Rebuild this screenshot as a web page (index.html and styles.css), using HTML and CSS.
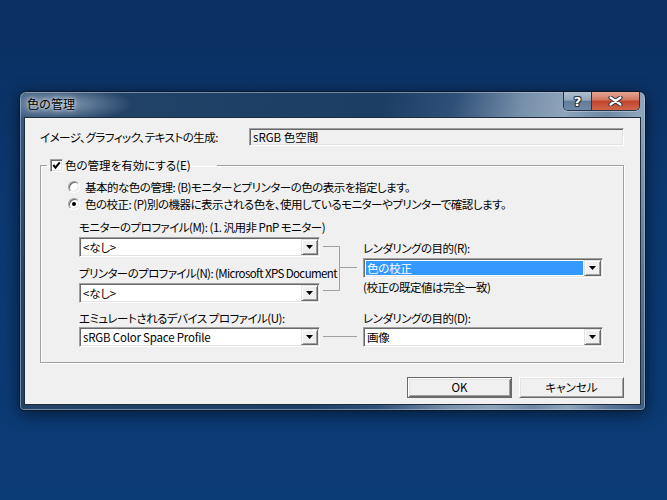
FILE: index.html
```html
<!DOCTYPE html>
<html lang="ja">
<head>
<meta charset="utf-8">
<title>色の管理</title>
<link rel="stylesheet" href="styles.css">
</head>
<body>
<div class="desktop">
  <div class="window">
    <div class="titlebar">
      <span class="title">色の管理</span>
      <div class="caption">
        <div class="cbtn help"><span>?</span></div>
        <div class="cbtn close">
          <svg width="15" height="10" viewBox="0 0 15 10"><path d="M2.5 1.5 L12.5 8.5 M12.5 1.5 L2.5 8.5" stroke="#27313d" stroke-width="4.2" stroke-linecap="round" fill="none"/><path d="M2.5 1.5 L12.5 8.5 M12.5 1.5 L2.5 8.5" stroke="#fff" stroke-width="2.2" stroke-linecap="round" fill="none"/></svg>
        </div>
      </div>
    </div>
    <div class="client">
      <div class="row-render">
        <span class="lbl">イメージ、グラフィック、テキストの生成:</span>
        <div class="textbox">sRGB 色空間</div>
      </div>
      <fieldset class="group">
        <legend class="group-head">
          <span class="check"><svg width="11" height="11" viewBox="0 0 11 11"><path d="M2.3 5 L4.5 7.6 L8.7 2.4" stroke="#000" stroke-width="2" fill="none"/></svg></span>
          <span>色の管理を有効にする(E)</span>
        </legend>
        <div class="radios">
          <div class="radio-row"><span class="radio"></span><span>基本的な色の管理: (B)モニターとプリンターの色の表示を指定します。</span></div>
          <div class="radio-row"><span class="radio on"></span><span>色の校正: (P)別の機器に表示される色を、使用しているモニターやプリンターで確認します。</span></div>
        </div>
        <div class="profiles">
          <div class="col-left">
            <div class="lbl l-m">モニターのプロファイル(M): (1. 汎用非 PnP モニター)</div>
            <div class="combo c-m"><span class="value">&lt;なし&gt;</span><span class="drop"><svg width="7" height="4" viewBox="0 0 7 4"><path d="M0 0 H7 L3.5 4 Z" fill="#000"/></svg></span></div>
            <div class="lbl l-n">プリンターのプロファイル(N): (Microsoft XPS Document</div>
            <div class="combo c-n"><span class="value">&lt;なし&gt;</span><span class="drop"><svg width="7" height="4" viewBox="0 0 7 4"><path d="M0 0 H7 L3.5 4 Z" fill="#000"/></svg></span></div>
            <div class="lbl l-u">エミュレートされるデバイス プロファイル(U):</div>
            <div class="combo c-u"><span class="value">sRGB Color Space Profile</span><span class="drop"><svg width="7" height="4" viewBox="0 0 7 4"><path d="M0 0 H7 L3.5 4 Z" fill="#000"/></svg></span></div>
          </div>
          <svg class="connector" width="43" height="128" viewBox="0 0 43 128">
            <g stroke="#a0a0a0" stroke-width="1" fill="none">
              <path d="M3 27.5 H19.5 V71.5 H3"/>
              <path d="M19.5 48.5 H37"/>
              <path d="M3 117.5 H37"/>
            </g>
          </svg>
          <div class="col-right">
            <div class="lbl l-r">レンダリングの目的(R):</div>
            <div class="combo c-r"><span class="value selected">色の校正</span><span class="drop"><svg width="7" height="4" viewBox="0 0 7 4"><path d="M0 0 H7 L3.5 4 Z" fill="#000"/></svg></span></div>
            <div class="lbl note">(校正の既定値は完全一致)</div>
            <div class="lbl l-d">レンダリングの目的(D):</div>
            <div class="combo c-d"><span class="value">画像</span><span class="drop"><svg width="7" height="4" viewBox="0 0 7 4"><path d="M0 0 H7 L3.5 4 Z" fill="#000"/></svg></span></div>
          </div>
        </div>
      </fieldset>
      <div class="buttons">
        <button class="btn default">OK</button>
        <button class="btn">キャンセル</button>
      </div>
    </div>
  </div>
</div>
</body>
</html>
```
FILE: styles.css
```css
* { box-sizing: border-box; }
html, body { margin: 0; height: 100%; }
body {
  background: linear-gradient(180deg, #0b2f60 0%, #0c3870 40%, #0b3b75 100%);
  font-family: "Noto Sans CJK JP", "Noto Sans", sans-serif;
  font-size: 12px;
  color: #000;
  overflow: hidden;
}
.desktop { padding: 91px 0 0 19px; }

.window {
  width: 627px;
  height: 320px;
  border: 1px solid #0a182a;
  border-radius: 7px 7px 5px 5px;
  padding: 0 5px 6px 5px;
  display: flex;
  flex-direction: column;
  background:
    radial-gradient(ellipse 70px 18px at 42px 12px, rgba(200,214,230,0.6), rgba(200,214,230,0) 100%),
    linear-gradient(104deg, #3a5a80 0%, #234468 7%, #1c3d64 52%, #2f5078 62%, #7890ab 72%, #8ea4bb 78%, #6e88a6 84%, #90a6bd 89%, #58759a 95%, #3b5c84 100%);
  box-shadow: 0 3px 16px rgba(0,0,0,0.55), inset 0 0 0 1px rgba(180,200,222,0.55);
}

.titlebar {
  height: 26px;
  display: flex;
  justify-content: space-between;
  align-items: flex-start;
}
.title {
  padding: 4px 0 0 2px;
  line-height: 16px;
  font-size: 12px;
  color: #000;
  text-shadow: 0 0 6px rgba(255,255,255,0.8), 0 0 3px rgba(255,255,255,0.7);
}
.caption {
  display: flex;
  height: 19px;
  border: 1px solid #25364a;
  border-top: none;
  border-radius: 0 0 5px 5px;
  overflow: hidden;
  box-shadow: 0 1px 0 rgba(200,215,230,0.5);
}
.cbtn {
  display: flex;
  align-items: center;
  justify-content: center;
  height: 100%;
}
.cbtn.help {
  width: 28px;
  border-right: 1px solid #25364a;
  background: linear-gradient(180deg, #b2c1d1 0%, #91a6bc 45%, #617b98 52%, #6f8aa8 100%);
}
.cbtn.help span {
  font-family: "DejaVu Sans", sans-serif;
  font-weight: bold;
  font-size: 13px;
  line-height: 13px;
  color: #fff;
  text-shadow: 0 0 1px #1d2835, 1px 1px 0 #2a3646, -1px -1px 0 #2a3646, 1px -1px 0 #2a3646, -1px 1px 0 #2a3646;
}
.cbtn.close {
  width: 47px;
  background: linear-gradient(180deg, #e6a595 0%, #d67a62 42%, #c2452c 52%, #d0664a 100%);
}

.client {
  height: 286px;
  background: #f0f0f0;
  box-shadow: 0 0 0 1px #1f2c3b;
  padding: 10px 16px 0 15px;
  display: flex;
  flex-direction: column;
  font-size: 11.5px;
  letter-spacing: -0.5px;
}

.row-render {
  display: flex;
  align-items: center;
  height: 18px;
}
.lbl { line-height: 16px; white-space: nowrap; font-feature-settings: "palt"; }
.textbox {
  margin-left: auto;
  width: 375px;
  height: 18px;
  border: 1px solid;
  border-color: #a0a0a0 #fff #fff #a0a0a0;
  box-shadow: inset 1px 1px 0 #696969, inset -1px -1px 0 #e3e3e3;
  padding: 0 3px;
  line-height: 16px;
  background: #f0f0f0;
  letter-spacing: 0;
}

.group {
  margin: 12px 0 0 0;
  padding: 0 0 15px 27px;
  border: 1px solid #a0a0a0;
  box-shadow: 1px 1px 0 #fff, inset 1px 1px 0 #fff;
  min-width: 0;
}
.group-head {
  display: flex;
  align-items: center;
  gap: 2px;
  width: 170px;
  height: 15px;
  margin-left: -21px;
  padding: 0 0 0 3px;
  line-height: 15px;
  font-feature-settings: "palt";
  white-space: nowrap;
  letter-spacing: 0;
}
.check {
  width: 13px;
  height: 13px;
  flex: none;
  border: 1px solid;
  border-color: #a0a0a0 #fff #fff #a0a0a0;
  box-shadow: inset 1px 1px 0 #696969, inset -1px -1px 0 #e3e3e3;
  background: #fff;
  display: flex;
  align-items: center;
  justify-content: center;
}
.check svg { display: block; }

.radios { margin-top: 5px; }
.radio-row {
  display: flex;
  align-items: center;
  height: 17px;
  gap: 5px;
  white-space: nowrap;
  font-feature-settings: "palt";
}
.radio {
  width: 12px;
  height: 12px;
  flex: none;
  border-radius: 50%;
  border: 1px solid;
  border-color: #a0a0a0 #fff #fff #a0a0a0;
  box-shadow: inset 1px 1px 0 #696969, inset -1px -1px 0 #e3e3e3;
  background: #fff;
  position: relative;
}
.radio.on::after {
  content: "";
  position: absolute;
  left: 3px;
  top: 3px;
  width: 4px;
  height: 4px;
  border-radius: 50%;
  background: #000;
}

.profiles {
  display: flex;
  margin: 7px 0 0 11px;
}
.col-left { width: 241px; display: flex; flex-direction: column; }
.col-right { width: 240px; display: flex; flex-direction: column; }
.connector { display: block; flex: none; }

.combo {
  display: flex;
  height: 20px;
  width: 100%;
  background: #fff;
  border: 1px solid;
  border-color: #a0a0a0 #fff #fff #a0a0a0;
  box-shadow: inset 1px 1px 0 #696969, inset -1px -1px 0 #e3e3e3;
  padding: 1px;
  letter-spacing: -0.2px;
}
.combo .value {
  flex: 1;
  line-height: 16px;
  padding-left: 2px;
  white-space: nowrap;
  overflow: hidden;
  font-feature-settings: "palt";
}
.combo .value.selected {
  background: #3399ff;
  color: #fff;
  margin: 1px;
  line-height: 14px;
  padding-left: 1px;
}
.combo .drop {
  width: 17px;
  height: 16px;
  flex: none;
  background: #f0f0f0;
  border: 1px solid;
  border-color: #e3e3e3 #696969 #696969 #e3e3e3;
  box-shadow: inset 1px 1px 0 #fff, inset -1px -1px 0 #a0a0a0;
  display: flex;
  align-items: center;
  justify-content: center;
}
.combo .drop svg { display: block; }

.l-m { height: 16px; }
.c-m { margin-top: 2px; }
.l-n { margin-top: 8px; letter-spacing: -0.6px; }
.c-n { margin-top: 2px; }
.l-u { margin-top: 7px; }
.c-u { margin-top: 1px; }
.l-r { margin-top: 21px; }
.c-r { margin-top: 2px; }
.note { margin-top: 1px; }
.l-d { margin-top: 15px; }
.c-d { margin-top: 1px; }

.buttons {
  display: flex;
  justify-content: flex-end;
  gap: 7px;
  margin-top: 14px;
}
.btn {
  width: 105px;
  height: 21px;
  font-family: "Noto Sans CJK JP", "Noto Sans", sans-serif;
  font-size: 11.5px;
  line-height: 15px;
  padding: 0;
  color: #000;
  background: #f0f0f0;
  border: 1px solid;
  border-color: #fff #696969 #696969 #fff;
  box-shadow: inset 1px 1px 0 #e3e3e3, inset -1px -1px 0 #a0a0a0;
  font-feature-settings: "palt";
}
.btn.default {
  border: 1px solid #696969;
  box-shadow: inset 1px 1px 0 #fff, inset -1px -1px 0 #696969, inset 2px 2px 0 #e3e3e3, inset -2px -2px 0 #a0a0a0;
}
```
